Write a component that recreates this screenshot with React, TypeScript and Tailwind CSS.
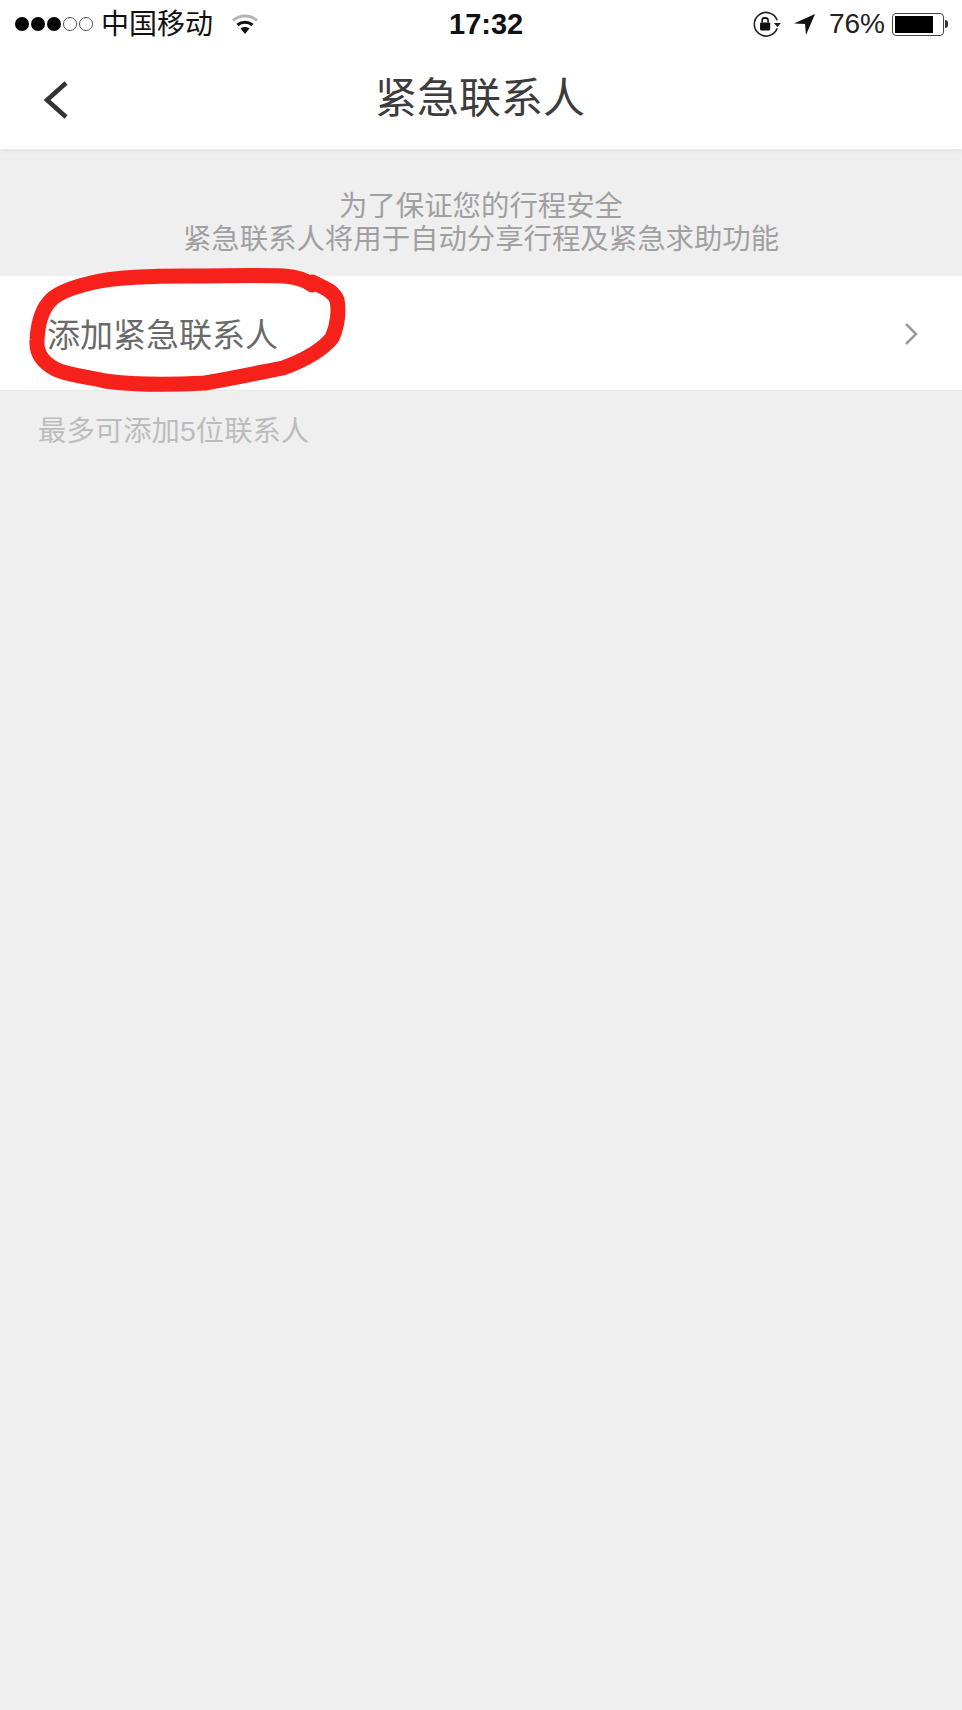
const cjk = "font-['Liberation_Sans','Noto_Sans_CJK_SC',sans-serif]";

function Dots() {
  return (
    <div className="flex items-center gap-[2px]">
      <div className="w-[14px] h-[14px] rounded-full bg-black" />
      <div className="w-[14px] h-[14px] rounded-full bg-black" />
      <div className="w-[14px] h-[14px] rounded-full bg-black" />
      <div className="w-[14px] h-[14px] rounded-full border border-[#555]" />
      <div className="w-[14px] h-[14px] rounded-full border border-[#555]" />
    </div>
  );
}

function Wifi() {
  return (
    <svg width="28" height="22" viewBox="0 0 28 22" fill="none">
      <path d="M2 7.5C9 1.5 19 1.5 26 7.5" stroke="#b5b5b5" strokeWidth="3" />
      <path d="M6.5 12C11 8.2 17 8.2 21.500 12" stroke="#111" strokeWidth="3" />
      <path d="M9.500 15.500C12 13.500 16 13.500 18.500 15.500L14 21Z" fill="#111" />
    </svg>
  );
}

function RotationLock() {
  return (
    <svg width="30" height="28" viewBox="0 0 28 26" fill="none">
      <path d="M23.500 9.500A11 11 0 1 0 23.500 17" stroke="#222" strokeWidth="1.500" />
      <path d="M20.500 12H27L23.700 16Z" fill="#222" />
      <rect x="7.500" y="11.500" width="9.500" height="7.500" rx="1" fill="#111" />
      <path d="M9.500 11.500V9.500C9.500 6.500 15 6.500 15 9.500V11.500" stroke="#111" strokeWidth="1.500" />
    </svg>
  );
}

function LocationArrow() {
  return (
    <svg width="21" height="21" viewBox="0 0 21 21">
      <path d="M21 0L0 9.500L11 10L12 21Z" fill="#111" />
    </svg>
  );
}

function Battery() {
  return (
    <div className="flex items-center">
      <div className="w-[52px] h-[23px] rounded-[4px] border border-[#444] p-[2px]">
        <div className="w-[38px] h-full bg-black" />
      </div>
      <div className="w-[3px] h-[8px] ml-[1px] rounded-r-full bg-[#333]" />
    </div>
  );
}

function StatusBar() {
  return (
    <div className="relative h-[48px] flex items-center justify-between pl-[15px] pr-[14px]">
      <div className="flex items-center">
        <Dots />
        <span className={`ml-[8px] pt-[2px] text-[28px] leading-none text-[#111] ${cjk}`}>中国移动</span>
        <div className="ml-[18px]"><Wifi /></div>
      </div>
      <span className="absolute left-[449px] top-[7px] text-[29px] leading-[34px] font-bold text-[#111] font-['Liberation_Sans',sans-serif]">17:32</span>
      <div className="flex items-center">
        <RotationLock />
        <div className="ml-[12px]"><LocationArrow /></div>
        <span className="ml-[14px] text-[28px] leading-none text-[#222] font-['Liberation_Sans',sans-serif]">76%</span>
        <div className="ml-[7px]"><Battery /></div>
      </div>
    </div>
  );
}

export default function App() {
  return (
    <div className={`relative w-[962px] h-[1710px] overflow-hidden bg-[#efeff0] ${cjk}`}>
      {/* Header */}
      <div className="bg-white h-[149px] shadow-[0_2px_6px_rgba(0,0,0,0.05)]">
        <StatusBar />
        <div className="relative h-[101px] flex items-center justify-center">
          <svg className="absolute left-[42px] top-[33px]" width="28" height="38" viewBox="0 0 28 38" fill="none">
            <path d="M24 2L5 19L24 36" stroke="#333" strokeWidth="4.500" />
          </svg>
          <span className="text-[42px] leading-none text-[#3c3c3c] pr-[2px]">紧急联系人</span>
        </div>
      </div>

      {/* Notice */}
      <div className="h-[127px] pt-[41px] text-center text-[28.400px] leading-[33px] text-[#a0a0a0]">
        <p>为了保证您的行程安全</p>
        <p>紧急联系人将用于自动分享行程及紧急求助功能</p>
      </div>

      {/* Add row */}
      <div className="h-[115px] bg-white border-b border-[#e8e8e8] flex items-center justify-between pl-[47px] pr-[44px]">
        <span className="text-[33px] leading-none text-[#6a6a6a] pt-[5px]">添加紧急联系人</span>
        <svg className="mt-[2px]" width="14" height="22" viewBox="0 0 14 22" fill="none">
          <path d="M2 1L12 11L2 21" stroke="#9c9c9c" strokeWidth="2.500" />
        </svg>
      </div>

      <p className="pl-[38px] pt-[22px] text-[28.400px] leading-[36px] text-[#bcbcbc]">最多可添加5位联系人</p>

      {/* Red hand-drawn circle */}
      <svg className="absolute left-0 top-[260px]" width="360" height="140" viewBox="0 260 360 140" fill="none">
        <path
          d="M312 285C306 280 298 277 284 276C255 275 225 276 190 276C150 276 120 277 100 281C80 285 62 290 52 299C42 308 38 322 37 340C36 352 42 362 55 369C70 376 85 376 105 381C135 385 170 385 205 383C235 378 262 372 283 368C305 360 322 350 332 338C338 325 339 310 337 300C333 290 322 287 312 282"
          stroke="#f5211a"
          strokeWidth="15"
          strokeLinecap="round"
          strokeLinejoin="round"
        />
      </svg>
    </div>
  );
}
